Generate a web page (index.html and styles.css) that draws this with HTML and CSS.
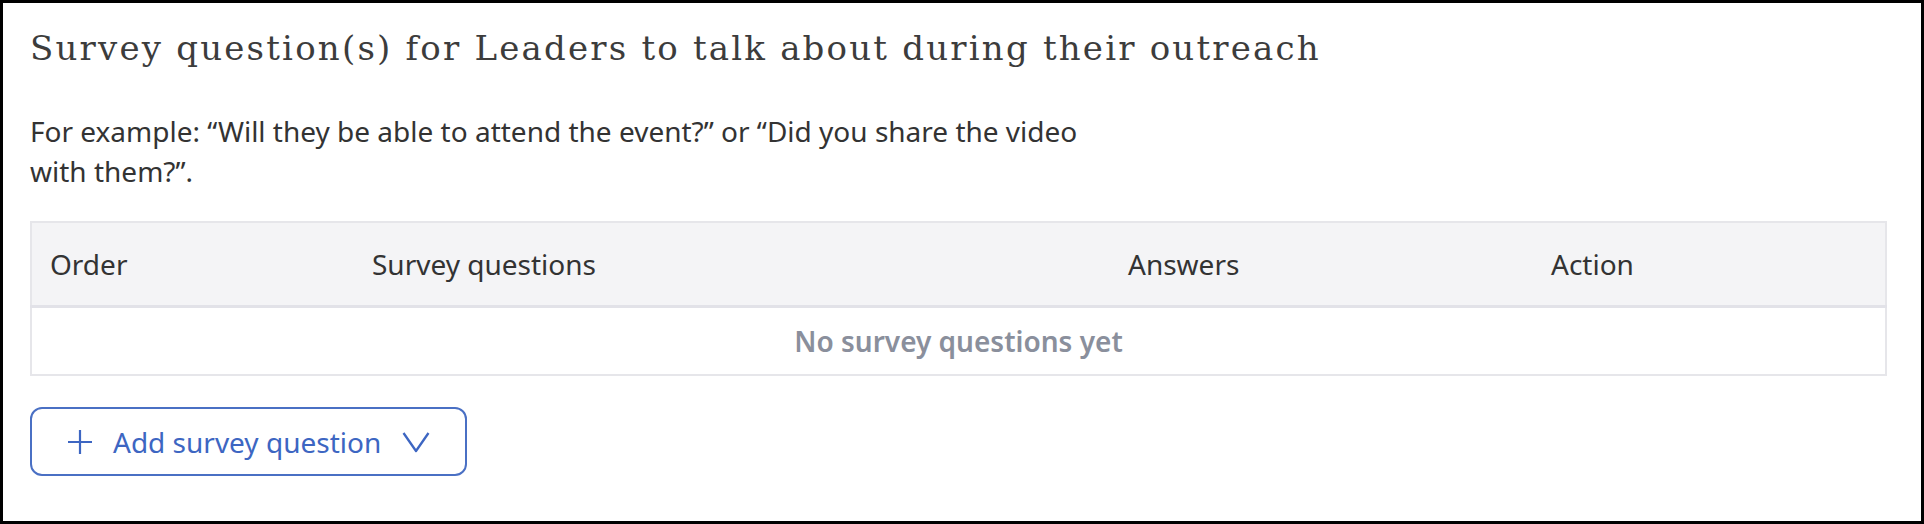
FILE: index.html
```html
<!DOCTYPE html>
<html lang="en">
<head>
<meta charset="utf-8">
<title>Survey questions</title>
<link rel="stylesheet" href="styles.css">
</head>
<body>
<main class="card">
  <h2 class="title">Survey question(s) for Leaders to talk about during their outreach</h2>
  <p class="hint">For example: “Will they be able to attend the event?” or “Did you share the video with them?”.</p>
  <table class="qtable">
    <colgroup>
      <col class="c-order">
      <col class="c-question">
      <col class="c-answers">
      <col class="c-action">
    </colgroup>
    <thead>
      <tr>
        <th>Order</th>
        <th>Survey questions</th>
        <th>Answers</th>
        <th>Action</th>
      </tr>
    </thead>
    <tbody>
      <tr>
        <td class="empty" colspan="4">No survey questions yet</td>
      </tr>
    </tbody>
  </table>
  <button class="add-btn" type="button">
    <svg class="ico" width="26" height="26" viewBox="0 0 26 26" aria-hidden="true"><path d="M13 1v24M1 13h24" stroke="currentColor" stroke-width="2.2" fill="none"/></svg>
    <span class="add-label">Add survey question</span>
    <svg class="ico chev" width="28" height="22" viewBox="0 0 28 22" aria-hidden="true"><path d="M1.5 2L14 20L26.5 2" stroke="currentColor" stroke-width="2.3" fill="none" stroke-linejoin="round"/></svg>
  </button>
</main>
</body>
</html>
```
FILE: styles.css
```css
html, body {
  margin: 0;
  padding: 0;
  background: #fff;
}

.card {
  box-sizing: border-box;
  width: 1924px;
  height: 524px;
  border: 3px solid #000;
  padding: 0 36px 0 27px;
  font-family: "Noto Sans", "Open Sans", sans-serif;
  color: #333;
}

.title {
  margin: 25px 0 0;
  font-family: "DejaVu Serif", "Liberation Serif", serif;
  font-weight: 400;
  font-size: 34px;
  letter-spacing: 2.2px;
  line-height: 40px;
  color: #3c3c3c;
}

.hint {
  margin: 43px 0 0;
  max-width: 1070px;
  font-size: 28px;
  line-height: 40px;
  color: #333;
}

.qtable {
  margin-top: 30px;
  width: 1855px;
  border-collapse: collapse;
  table-layout: fixed;
  border: 2px solid #e6e6ea;
}

.c-order { width: 323px; }
.c-question { width: 756px; }
.c-answers { width: 423px; }
.c-action { width: 353px; }

.qtable th {
  background: #f4f4f6;
  height: 82px;
  padding: 0 18px;
  text-align: left;
  font-weight: 400;
  font-size: 28px;
  color: #333;
  border-bottom: 3px solid #e2e2e8;
}

.qtable td.empty {
  height: 66px;
  padding: 0;
  text-align: center;
  font-size: 28px;
  font-weight: 600;
  color: #8a8f9c;
}

.add-btn {
  display: flex;
  align-items: center;
  box-sizing: border-box;
  width: 437px;
  height: 69px;
  margin-top: 31px;
  padding: 0 0 0 35px;
  background: #fff;
  border: 2px solid #4a70c4;
  border-radius: 12px;
  font-family: "Noto Sans", "Open Sans", sans-serif;
  font-size: 28px;
  color: #3d66c2;
  cursor: pointer;
}

.ico {
  flex: none;
  display: block;
}

.add-label {
  margin-left: 20px;
}

.chev {
  margin-left: 21px;
}
```
